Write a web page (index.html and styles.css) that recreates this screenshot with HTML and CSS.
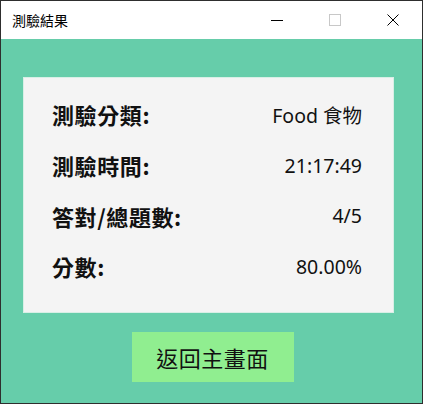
FILE: index.html
```html
<!DOCTYPE html>
<html lang="zh-Hant">
<head>
<meta charset="utf-8">
<title>測驗結果</title>
<link rel="stylesheet" href="styles.css">
</head>
<body>
<div class="window">
  <div class="titlebar">
    <div class="title">測驗結果</div>
    <div class="controls">
      <div class="ctl">
        <svg width="12" height="12" viewBox="0 0 12 12"><path d="M0 6.5H12" stroke="#000" stroke-width="1"/></svg>
      </div>
      <div class="ctl">
        <svg width="12" height="12" viewBox="0 0 12 12"><rect x="0.5" y="0.5" width="11" height="11" fill="none" stroke="#c8c8c8" stroke-width="1"/></svg>
      </div>
      <div class="ctl">
        <svg width="12" height="12" viewBox="0 0 12 12"><path d="M0.5 0.5L11.5 11.5M11.5 0.5L0.5 11.5" stroke="#000" stroke-width="1"/></svg>
      </div>
    </div>
  </div>
  <div class="content">
    <div class="card">
      <div class="row"><span class="label">測驗分類:</span><span class="value">Food 食物</span></div>
      <div class="row"><span class="label">測驗時間:</span><span class="value">21:17:49</span></div>
      <div class="row"><span class="label">答對/總題數:</span><span class="value">4/5</span></div>
      <div class="row"><span class="label">分數:</span><span class="value">80.00%</span></div>
    </div>
    <div class="btn-wrap">
      <div class="btn">返回主畫面</div>
    </div>
  </div>
</div>
</body>
</html>
```
FILE: styles.css
```css
* { box-sizing: border-box; }
html, body { margin: 0; padding: 0; }
body {
  width: 423px;
  height: 404px;
  overflow: hidden;
  font-family: "Noto Sans", "Noto Sans CJK TC", sans-serif;
  color: #111;
}
.window {
  width: 423px;
  height: 404px;
  border: 1px solid #2e2e2e;
  display: flex;
  flex-direction: column;
  background: #66cdaa;
}
.titlebar {
  height: 38px;
  background: #fff;
  display: flex;
  align-items: center;
  justify-content: space-between;
  flex: none;
}
.title {
  padding-left: 11px;
  font-family: "Noto Sans CJK TC", sans-serif;
  font-size: 14px;
  color: #000;
  margin-top: -1px;
}
.controls {
  display: flex;
  height: 100%;
}
.ctl {
  width: 58px;
  height: 100%;
  display: flex;
  align-items: center;
  justify-content: center;
}
.ctl svg { display: block; }
.content {
  flex: 1;
  padding: 38px 28px 0 22px;
  display: flex;
  flex-direction: column;
}
.card {
  height: 236px;
  background: #f4f4f4;
  border: 1px solid #d8efe6;
  padding: 11px 31px 0 28px;
  display: flex;
  flex-direction: column;
}
.row {
  height: 50.7px;
  display: flex;
  justify-content: space-between;
  align-items: center;
}
.label {
  font-family: "Noto Sans CJK TC", sans-serif;
  font-weight: 700;
  font-size: 22px;
  letter-spacing: 0.6px;
  color: #111;
}
.value {
  font-family: "Noto Sans", "Noto Sans CJK TC", sans-serif;
  font-size: 19.5px;
  color: #111;
}
.btn-wrap {
  display: flex;
  justify-content: center;
  padding-top: 19px;
  padding-left: 8px;
}
.btn {
  width: 162px;
  height: 50px;
  background: #90ee90;
  display: flex;
  align-items: center;
  justify-content: center;
  font-family: "Noto Sans CJK TC", sans-serif;
  font-size: 22px;
  letter-spacing: 0.5px;
  color: #111;
}
```
